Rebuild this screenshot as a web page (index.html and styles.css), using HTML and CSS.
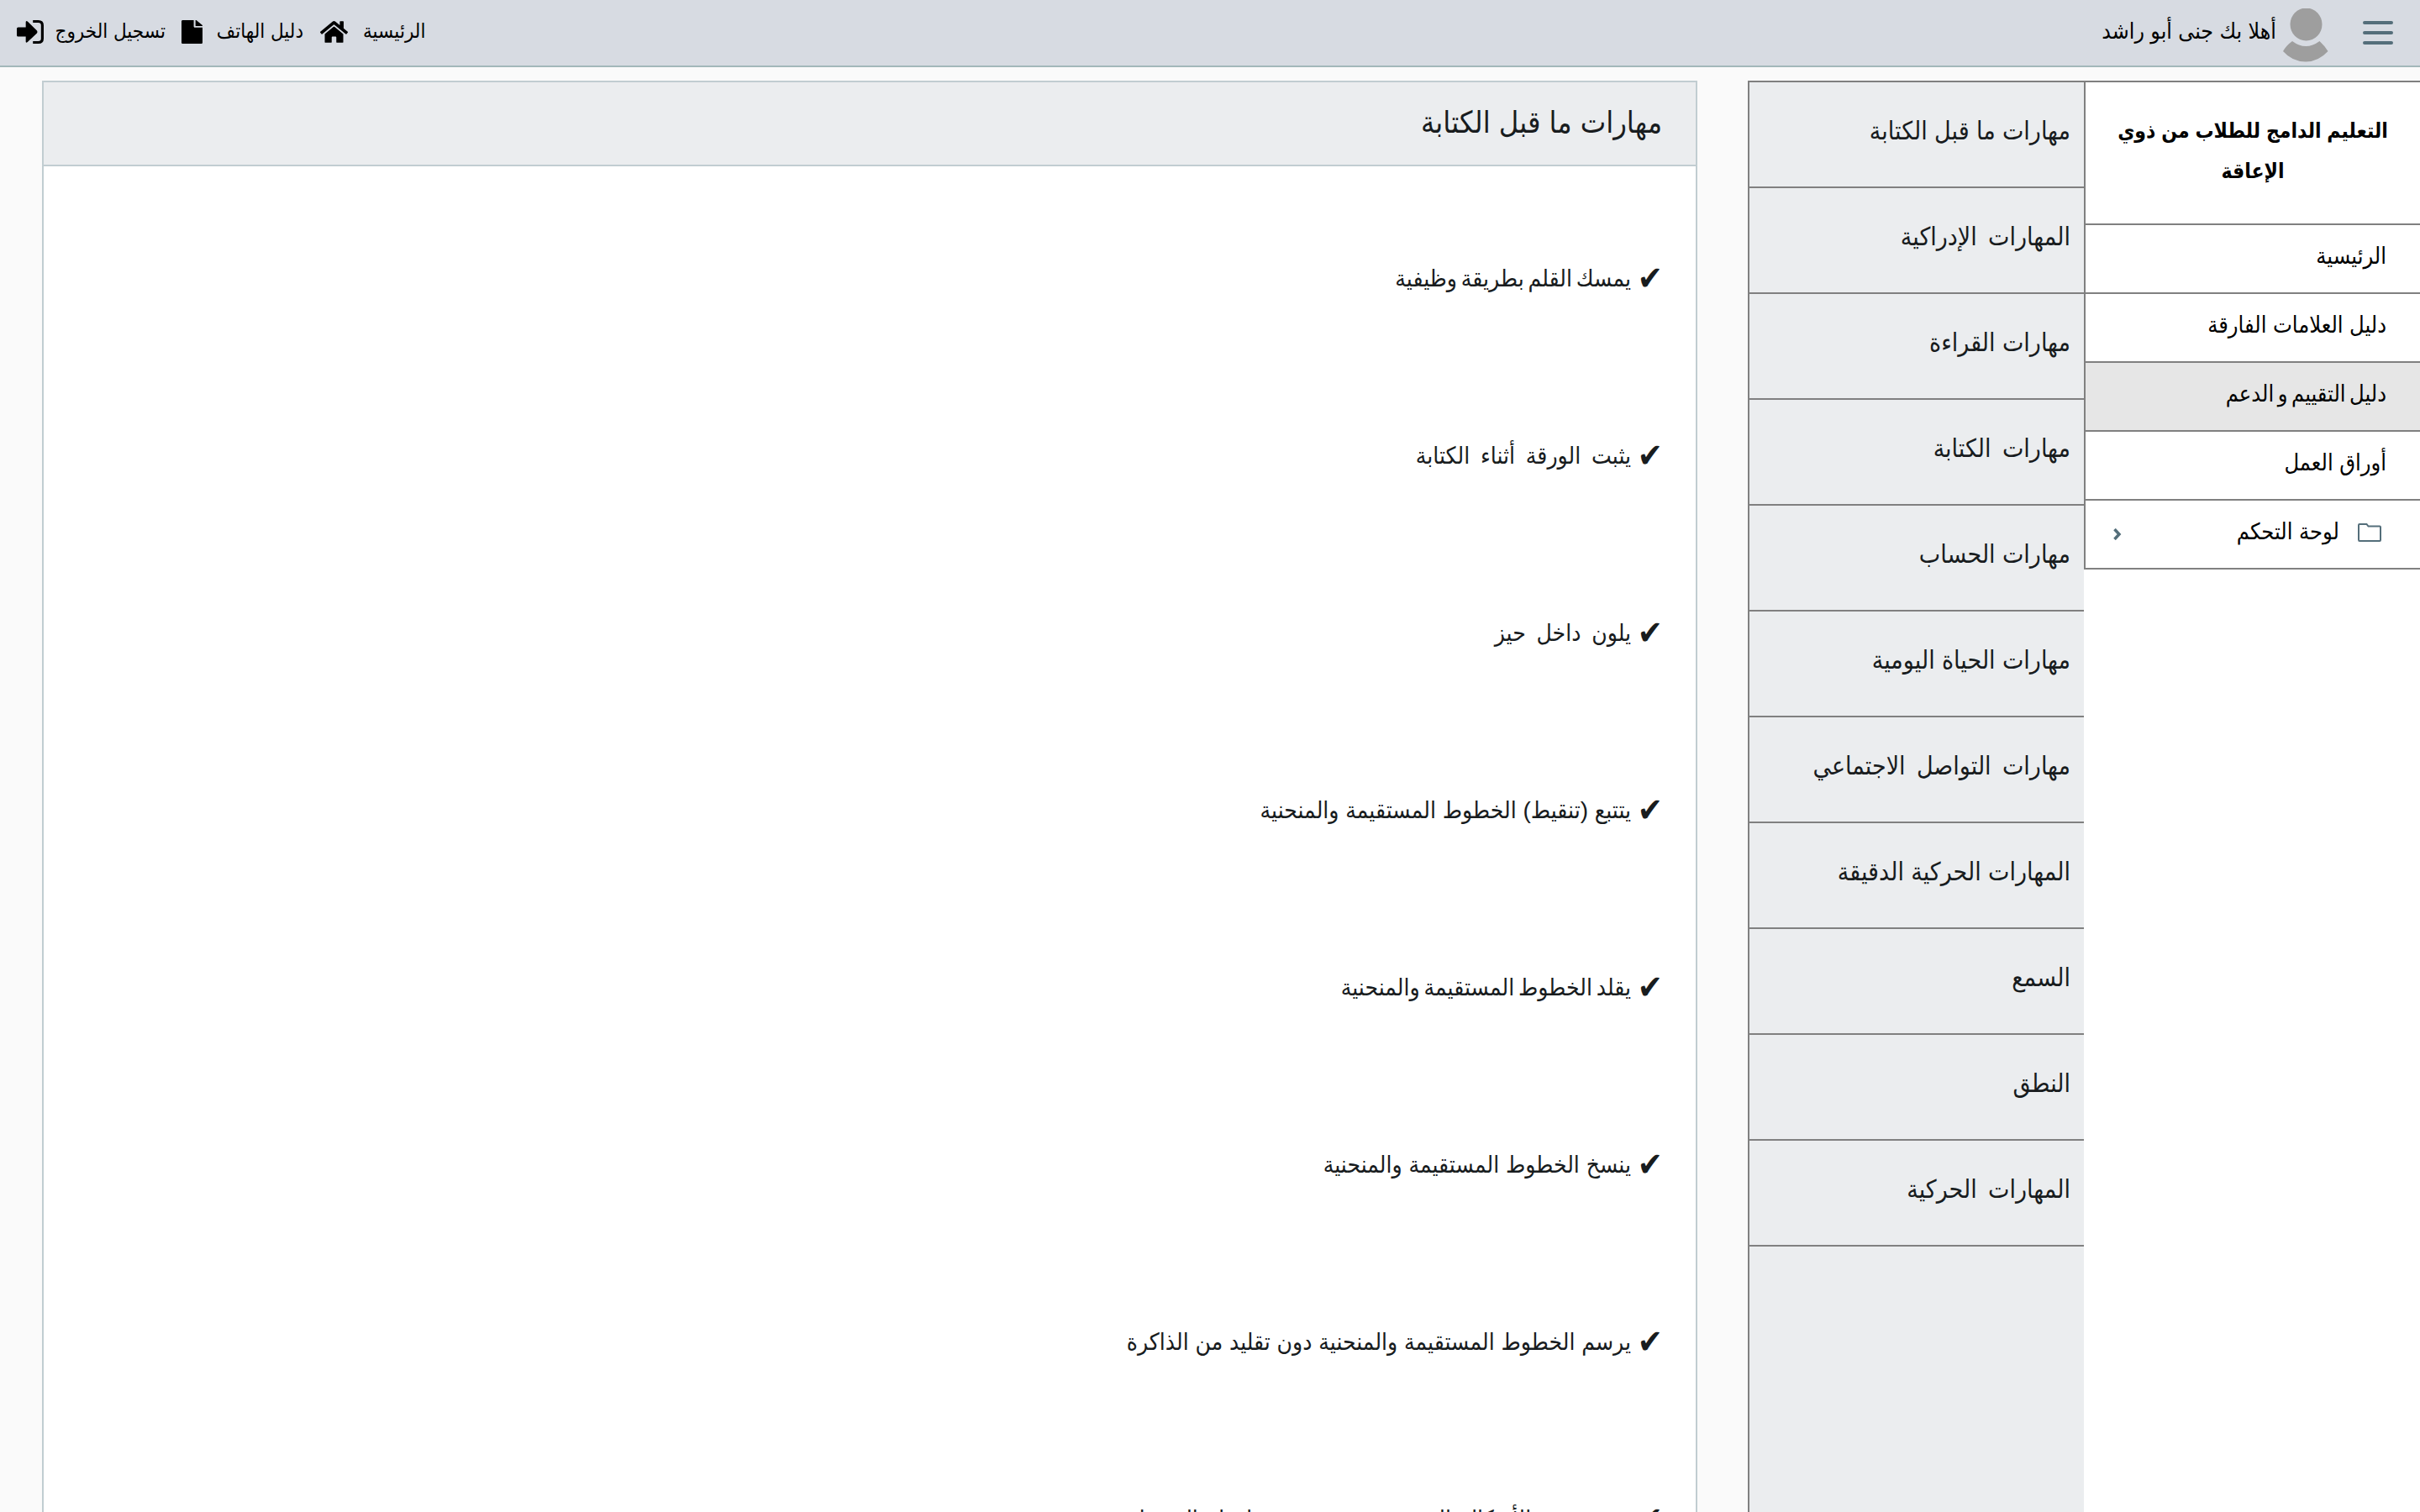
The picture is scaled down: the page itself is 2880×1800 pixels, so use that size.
FILE: index.html
```html
<!DOCTYPE html>
<html lang="ar" dir="rtl">
<head>
  <meta charset="UTF-8">
  <meta name="viewport" content="width=device-width, initial-scale=1.0">
  <title>مهارات ما قبل الكتابة</title>
  <link rel="stylesheet" href="styles.css">
</head>
<body>
  <header class="topbar">
    <div class="user">
      <svg class="burger" viewBox="0 0 36 28"><path d="M2 2H34M2 14H34M2 26H34"/></svg>
      <svg class="avatar" viewBox="0 0 54 64">
        <ellipse cx="27.500" cy="19" rx="19" ry="19.500"/>
        <path d="M11 39 Q27 51 43.500 39 Q50 45 53.500 51 Q42 63.500 27 63.500 Q11 63.500 0 51 Q4 44 11 39Z"/>
      </svg>
      <span class="greeting">أهلا بك جنى أبو راشد</span>
    </div>
    <nav class="links">
      <a class="link">الرئيسية</a>
      <svg class="icon-home" viewBox="0 32 576 448"><path d="M280 148 96 300v164a16 16 0 0 0 16 16l112-.3a16 16 0 0 0 16-16V368a16 16 0 0 1 16-16h64a16 16 0 0 1 16 16v95.600a16 16 0 0 0 16 16L464 480a16 16 0 0 0 16-16V300L296 148a12 12 0 0 0-15 0zM572 251 488 182V44a12 12 0 0 0-12-12h-56a12 12 0 0 0-12 12v72l-90-74a48 48 0 0 0-61 0L4 251a12 12 0 0 0-2 17l26 31a12 12 0 0 0 17 2L280 107a12 12 0 0 1 15 0L531 301a12 12 0 0 0 17-2l26-31a12 12 0 0 0-2-17z"/></svg>
      <a class="link link-phone">دليل الهاتف</a>
      <svg class="icon-file" viewBox="0 0 384 512" preserveAspectRatio="none"><path d="M224 136V0H24C11 0 0 11 0 24v464c0 13 11 24 24 24h336c13 0 24-11 24-24V160H248c-13 0-24-11-24-24zm160-14v6H256V0h6c6 0 12 3 17 7l98 98c4 5 7 11 7 17z"/></svg>
      <a class="link link-logout">تسجيل الخروج</a>
      <svg class="icon-exit" viewBox="0 0 30 28" preserveAspectRatio="none"><path d="M1.500 8.500H10V2.500Q10 0 12 1.500L22.500 12.500Q23.500 14 22.500 15.500L12 26Q10 27.500 10 25.500V19.500H1.500Q0 19.500 0 18V10Q0 8.500 1.500 8.500Z"/><path class="frame" d="M18 1.500H24Q28.500 1.500 28.500 6V22Q28.500 26.500 24 26.500H18"/></svg>
    </nav>
  </header>

  <div class="page">
    <aside class="sidebar">
      <h2 class="brand">التعليم الدامج للطلاب من ذوي الإعاقة</h2>
      <a class="menu-item">الرئيسية</a>
      <a class="menu-item">دليل العلامات الفارقة</a>
      <a class="menu-item active tight">دليل التقييم و الدعم</a>
      <a class="menu-item">أوراق العمل</a>
      <a class="menu-item has-icon">
        <svg class="folder" viewBox="0 0 28 22"><path d="M1 19.500V2Q1 1 2 1H10.500L12.500 3.500H26Q27 3.500 27 4.500V20Q27 21 26 21H2Q1 21 1 19.500Z"/></svg>
        <span>لوحة التحكم</span>
        <svg class="chevron" viewBox="0 0 10 14"><path d="M1.500 1 7 7 1.500 13"/></svg>
      </a>
    </aside>

    <nav class="skills">
      <a class="skill">مهارات ما قبل الكتابة</a>
      <a class="skill wide">المهارات الإدراكية</a>
      <a class="skill">مهارات القراءة</a>
      <a class="skill wide">مهارات الكتابة</a>
      <a class="skill">مهارات الحساب</a>
      <a class="skill">مهارات الحياة اليومية</a>
      <a class="skill wide">مهارات التواصل الاجتماعي</a>
      <a class="skill">المهارات الحركية الدقيقة</a>
      <a class="skill">السمع</a>
      <a class="skill">النطق</a>
      <a class="skill wide">المهارات الحركية</a>
    </nav>

    <main class="panel">
      <h1 class="panel-title">مهارات ما قبل الكتابة</h1>
      <ul class="checks">
        <li class="tight"><span class="tick">✔</span>يمسك القلم بطريقة وظيفية</li>
        <li class="wide"><span class="tick">✔</span>يثبت الورقة أثناء الكتابة</li>
        <li class="wide"><span class="tick">✔</span>يلون داخل حيز</li>
        <li><span class="tick">✔</span>يتتبع (تنقيط) الخطوط المستقيمة والمنحنية</li>
        <li class="tight"><span class="tick">✔</span>يقلد الخطوط المستقيمة والمنحنية</li>
        <li><span class="tick">✔</span>ينسخ الخطوط المستقيمة والمنحنية</li>
        <li><span class="tick">✔</span>يرسم الخطوط المستقيمة والمنحنية دون تقليد من الذاكرة</li>
        <li class="wide"><span class="tick">✔</span>يتتبع رسم الأشكال الهندسية من مربع خطوط بالتنقيط</li>
      </ul>
    </main>
  </div>
</body>
</html>
```
FILE: styles.css
```css
* {
  box-sizing: border-box;
}

body {
  margin: 0;
  height: 1800px;
  overflow: hidden;
  background: #fafafa;
  color: #181c1e;
  font-family: "Liberation Sans", "DejaVu Sans Condensed", "DejaVu Sans", sans-serif;
  font-stretch: condensed;
}

svg {
  display: block;
  flex: none;
}

.wide {
  word-spacing: 5px;
}

.tight {
  word-spacing: -3px;
}

/* top bar */
.topbar {
  display: flex;
  justify-content: space-between;
  height: 80px;
  padding: 0 32px 0 20px;
  background: #d7dbe2;
  border-bottom: 2px solid #a3b8ba;
  color: #000;
  font-size: 24px;
  line-height: 74px;
  white-space: nowrap;
}

.user,
.links {
  display: flex;
}

.burger {
  width: 36px;
  height: 28px;
  margin: 25px 0 0 41px;
  fill: none;
  stroke: #546e7a;
  stroke-width: 4;
  stroke-linecap: round;
}

.avatar {
  width: 54px;
  height: 64px;
  margin: 10px 0 0 8px;
  fill: #9e9e9e;
}

.greeting {
  font-size: 26.5px;
}

.links svg {
  margin-top: 24px;
}

.icon-home {
  width: 33px;
  height: 28px;
  margin: 0 18px 0 20px;
}

.icon-file {
  width: 25px;
  height: 28px;
  margin: 0 17px 0 19px;
}

.icon-exit {
  width: 32px;
  height: 28px;
  margin-right: 11px;
}

.icon-exit .frame {
  fill: none;
  stroke: #000;
  stroke-width: 3;
}

.link-phone {
  width: 103px;
}

.link-logout {
  width: 134px;
}

/* columns */
.page {
  display: flex;
  height: 1704px;
  margin-top: 16px;
  overflow: hidden;
}

.sidebar {
  width: 400px;
  background: #fff;
  border-top: 2px solid #808080;
  color: #000;
}

.brand {
  height: 170px;
  margin: 0;
  padding: 34px 38px 0;
  border-left: 2px solid #808080;
  border-bottom: 2px solid #808080;
  font-size: 24.5px;
  line-height: 48px;
  text-align: center;
}

.menu-item {
  display: block;
  height: 82px;
  padding-right: 40px;
  border-left: 2px solid #808080;
  border-bottom: 2px solid #808080;
  font-size: 27px;
  line-height: 75px;
}

.active {
  background: #e6e6e6;
}

.has-icon {
  display: flex;
  padding-right: 46px;
}

.folder {
  width: 28px;
  height: 22px;
  margin: 27px 0 0 22px;
  fill: none;
  stroke: #546e7a;
  stroke-width: 2;
}

.chevron {
  width: 10px;
  height: 14px;
  margin: 33px auto 0 33px;
  fill: none;
  stroke: #546e7a;
  stroke-width: 3.5;
}

.skills {
  width: 400px;
  background: #ebedef;
  border-top: 2px solid #808080;
  border-left: 2px solid #808080;
}

.skill {
  display: block;
  height: 126px;
  padding-right: 16px;
  border-bottom: 2px solid #808080;
  font-size: 30px;
  line-height: 115px;
}

.panel {
  width: 1970px;
  margin-right: 60px;
  background: #fff;
  border: 2px solid #c1cdd1;
  border-bottom: 0;
}

.panel-title {
  height: 100px;
  margin: 0;
  padding-right: 40px;
  background: #ebedef;
  border-bottom: 2px solid #c1cdd1;
  font-size: 36px;
  font-weight: normal;
  line-height: 95px;
}

.checks {
  margin: 0;
  padding: 28px 39px 0 0;
  list-style: none;
  font-size: 28px;
  line-height: 211px;
}

.checks li {
  display: flex;
  height: 211px;
}

.tick {
  width: 38px;
  font-size: 40px;
}
```
